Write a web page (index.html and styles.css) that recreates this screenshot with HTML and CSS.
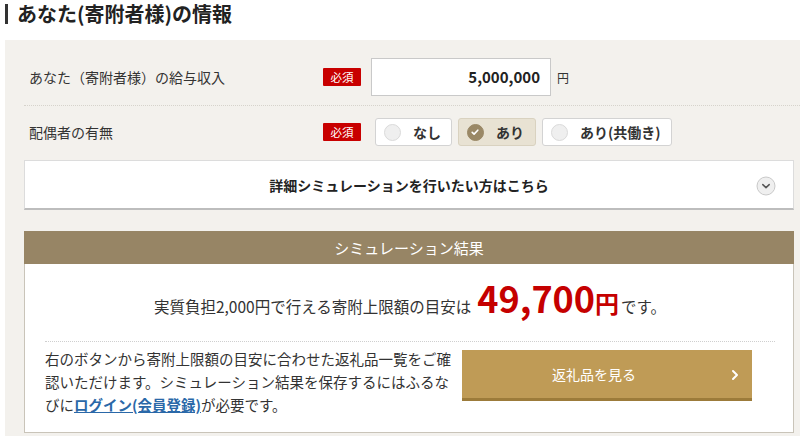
FILE: index.html
```
<!DOCTYPE html>
<html lang="ja">
<head>
<meta charset="utf-8">
<link rel="stylesheet" href="styles.css">
</head>
<body>
<h2 class="title">あなた(寄附者様)の情報</h2>
<div class="panel">
  <div class="row row-first">
    <div class="label">あなた（寄附者様）の給与収入</div>
    <span class="badge">必須</span>
    <div class="input">5,000,000</div>
    <span class="unit">円</span>
  </div>
  <div class="row row-second">
    <div class="label">配偶者の有無</div>
    <span class="badge">必須</span>
    <div class="radios">
      <div class="radio"><span class="dot"></span>なし</div>
      <div class="radio radio-on"><span class="dot dot-on"><svg width="16" height="16" viewBox="0 0 16 16"><path d="M5.2 8.3 L7.1 10.1 L10.8 6.2" fill="none" stroke="#fff" stroke-width="1.6" stroke-linecap="round" stroke-linejoin="round"/></svg></span>あり</div>
      <div class="radio"><span class="dot"></span>あり(共働き)</div>
    </div>
  </div>
  <div class="detail">
    <span class="detail-text">詳細シミュレーションを行いたい方はこちら</span>
    <span class="chev"><svg width="20" height="20" viewBox="0 0 20 20"><circle cx="10" cy="10" r="9" fill="#efefef" stroke="#c9c9c9" stroke-width="1"/><path d="M6.8 8.6 L10 11.6 L13.2 8.6" fill="none" stroke="#555" stroke-width="1.5" stroke-linecap="round" stroke-linejoin="round"/></svg></span>
  </div>
  <div class="result">
    <div class="result-head">シミュレーション結果</div>
    <div class="result-body">
      <p class="result-line">実質負担2,000円で行える寄附上限額の目安は<span class="amount">49,700<span class="yen">円</span></span>です。</p>
      <div class="result-lower">
        <p class="note">右のボタンから寄附上限額の目安に合わせた返礼品一覧をご確認いただけます。シミュレーション結果を保存するにはふるなびに<a class="link" href="#">ログイン(会員登録)</a>が必要です。</p>
        <a class="btn" href="#"><span>返礼品を見る</span><svg class="btn-arrow" width="8" height="12" viewBox="0 0 8 12"><path d="M2 2 L6 6 L2 10" fill="none" stroke="#fff" stroke-width="2" stroke-linecap="round" stroke-linejoin="round"/></svg></a>
      </div>
    </div>
  </div>
</div>
</body>
</html>
```
FILE: styles.css
```
html, body {
  margin: 0;
  padding: 0;
  background: #fff;
  font-family: "Noto Sans CJK JP", "Noto Sans", sans-serif;
  color: #333;
  overflow: hidden;
}
.title {
  margin: 0 0 16px 5px;
  padding: 4px 0 0 12px;
  font-size: 20px;
  line-height: 20px;
  font-weight: bold;
  color: #222;
  position: relative;
}
.title::before {
  content: "";
  position: absolute;
  left: 0;
  top: 4px;
  width: 3px;
  height: 20px;
  background: #333;
}
.panel {
  margin-left: 5px;
  background: #f3f1ed;
  padding: 18px 6px 20px 19px;
  min-height: 400px;
}
.row {
  display: flex;
  align-items: center;
  margin-right: -6px;
}
.row-first {
  padding-bottom: 9px;
  border-bottom: 1px dotted #d6d3cc;
}
.row-second {
  padding-top: 12px;
  padding-bottom: 13px;
}
.label {
  width: 294px;
  padding-left: 5px;
  font-size: 14px;
  color: #333;
}
.badge {
  display: inline-block;
  width: 38px;
  height: 18px;
  line-height: 18px;
  text-align: center;
  background: #c80000;
  color: #fff;
  font-size: 11.5px;
  border-radius: 1px;
  margin-right: 10px;
}
.input {
  width: 168px;
  height: 36px;
  line-height: 36px;
  border: 1px solid #c9c9c9;
  background: #fff;
  text-align: right;
  padding-right: 10px;
  font-size: 15px;
  font-weight: bold;
  color: #222;
}
.unit {
  font-size: 12px;
  margin-left: 6px;
  color: #333;
}
.radios {
  display: flex;
  gap: 6px;
  margin-left: 4px;
}
.radio {
  display: flex;
  align-items: center;
  height: 26px;
  padding: 0 10px 0 8px;
  background: #fff;
  border: 1px solid #d3d3d3;
  border-radius: 3px;
  font-size: 14px;
  font-weight: bold;
  color: #333;
}
.radio-on {
  background: #e8e2d3;
  border-color: #d9d2c0;
  padding-right: 11px;
}
.dot {
  width: 15px;
  height: 15px;
  border-radius: 50%;
  background: #efefef;
  border: 1px solid #dadada;
  margin-right: 12px;
}
.dot-on {
  background: #9a8866;
  border-color: #9a8866;
  position: relative;
}
.dot-on svg {
  position: absolute;
  left: -1px;
  top: -1px;
}
.detail {
  position: relative;
  display: flex;
  align-items: center;
  justify-content: center;
  height: 47px;
  margin-top: 1px;
  background: #fff;
  border: 1px solid #dcdcdc;
  border-bottom: 2px solid #bdbdbd;
}
.detail-text {
  font-size: 14px;
  font-weight: bold;
  color: #222;
}
.chev {
  position: absolute;
  right: 17px;
  top: 15px;
  width: 20px;
  height: 20px;
}
.result {
  margin-top: 21px;
}
.result-head {
  height: 33px;
  line-height: 33px;
  background: #978565;
  color: #fff;
  text-align: center;
  font-size: 15px;
}
.result-body {
  background: #fff;
  border: 1px solid #c9c4b9;
  border-top: none;
  padding: 0 18px 16px 20px;
}
.result-line {
  margin: 0;
  padding: 13px 0 15px;
  text-align: center;
  font-size: 15.5px;
  line-height: 40px;
  color: #333;
  border-bottom: 1px dotted #cfcfcf;
}
.amount {
  font-size: 36px;
  font-weight: bold;
  color: #c50000;
  margin: 0 2px 0 6px;
}
.yen {
  font-size: 24px;
}
.result-lower {
  display: flex;
  align-items: flex-start;
  padding-top: 5px;
}
.note {
  flex: 0 0 408px;
  margin: 0;
  font-size: 14.5px;
  line-height: 23px;
  color: #333;
}
.link {
  color: #2a68a8;
  font-weight: bold;
  text-decoration: underline;
}
.btn {
  display: flex;
  align-items: center;
  justify-content: center;
  position: relative;
  width: 290px;
  height: 48px;
  margin: 3px 0 0 9px;
  background: #bf9b56;
  border-bottom: 3px solid #9c7b3a;
  color: #fff;
  font-size: 14px;
  text-decoration: none;
}
.btn span {
  margin-right: 26px;
}
.btn-arrow {
  position: absolute;
  right: 13px;
  top: 19px;
}
```
